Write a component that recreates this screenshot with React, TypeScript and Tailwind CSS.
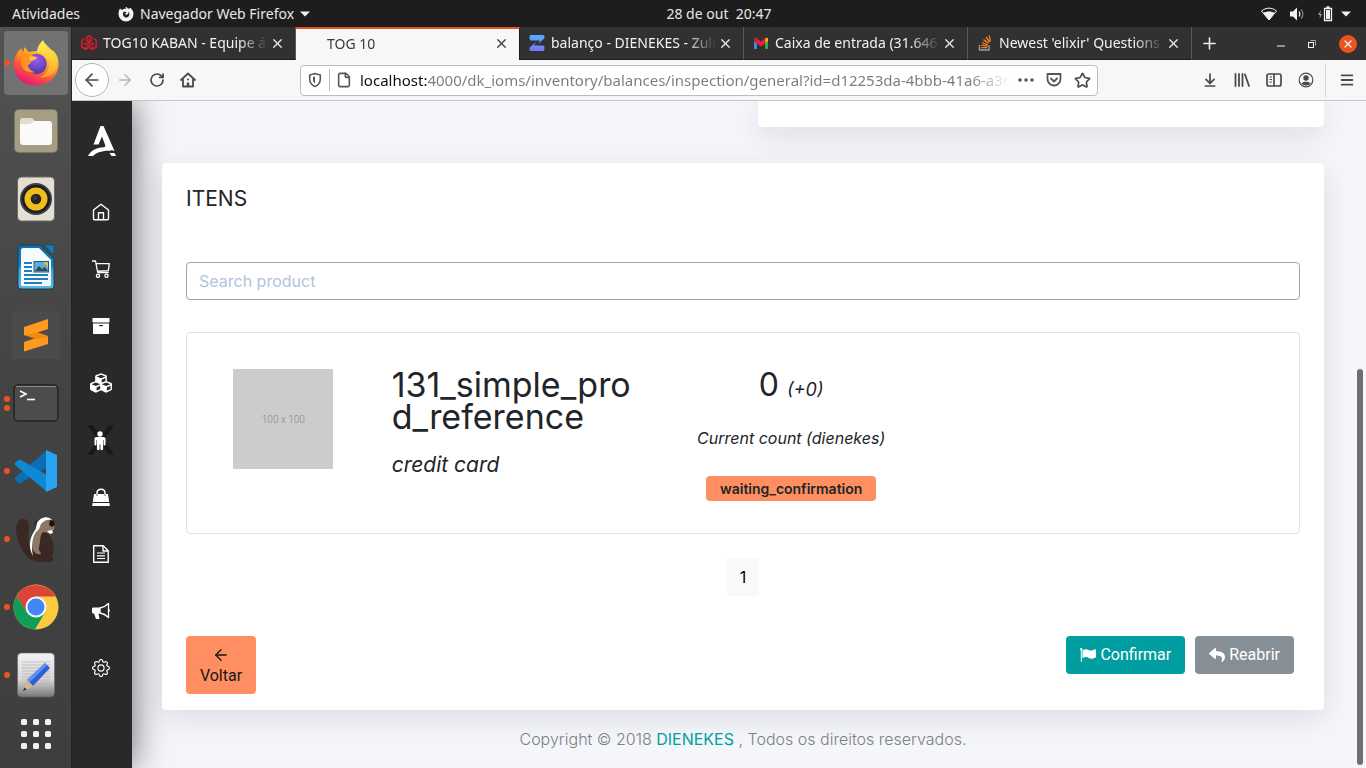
import React from "react";
import {
  ArrowDownToLine,
  ArrowLeft,
  ArrowRight,
  File,
  Menu,
  Plus,
  RotateCw,
  Star,
  X,
} from "lucide-react";
import { FaCubes, FaReply } from "react-icons/fa";
import { BsGear } from "react-icons/bs";

/* ---------- desktop dock icons ---------- */

function FirefoxIcon() {
  return (
    <svg viewBox="0 0 48 48" className="size-12">
      <defs>
        <linearGradient id="ffBody" x1="0.8" y1="0.05" x2="0.3" y2="1">
          <stop offset="0" stopColor="#fff14f" />
          <stop offset="0.35" stopColor="#ffb02e" />
          <stop offset="0.65" stopColor="#ff5a36" />
          <stop offset="1" stopColor="#e5127d" />
        </linearGradient>
        <radialGradient id="ffGlobe" cx="0.5" cy="0.3" r="0.7">
          <stop offset="0" stopColor="#a259f5" />
          <stop offset="1" stopColor="#4b38a8" />
        </radialGradient>
        <linearGradient id="ffTail" x1="0.5" y1="0" x2="0.5" y2="1">
          <stop offset="0" stopColor="#fff44f" />
          <stop offset="1" stopColor="#ffa12c" />
        </linearGradient>
      </defs>
      <path
        d="M8 10c-4 5-6.300 10-6.300 15.500C1.700 38 11.500 46.500 24 46.500S46.500 37 46.500 25c0-6-2-10-5-13l-2-1-8-8-6 9-9 1-4-5-1 5z"
        fill="url(#ffBody)"
      />
      <path
        d="M31 1c-4 4-6 8-6 12 8 1 12 6 12 13 0 6-4 10-9 12 9 2 17-5 17.500-13 .3-7-3-10-5.500-13l.5 4C38 10 33 7 31 1z"
        fill="url(#ffTail)"
      />
      <circle cx="24.500" cy="25" r="10.200" fill="url(#ffGlobe)" />
      <path
        d="M10 8c0 3 .5 4 2 6 3-1 6 0 8 2 1 1 3 2 5 2-1 3-4 3-5 4-2 2-1 3-4 4 0 3 3 6 7 7-6 2-14-2-14-10 0-3 1-5 1-7-2 1-3 3-4 5 0-5 2-9 4-13z"
        fill="#ff9422"
      />
      <path d="M17 18c3-1 5 0 8 0-1 3-4 3-5 4-2-1-3-2-3-4z" fill="#ffc04d" />
    </svg>
  );
}

function FilesIcon() {
  return (
    <svg viewBox="0 0 44 44" className="size-11">
      <rect width="44" height="44" rx="5" fill="#7b745f" />
      <rect x="1" y="1" width="42" height="42" rx="4" fill="#a69d85" />
      <path d="M6 12c0-2 1-3 3-3h9l4 4v4H6z" fill="#e0dccf" />
      <path d="M6 15h10l5-3h14c2 0 3 1 3 3v18c0 2-1 3-3 3H9c-2 0-3-1-3-3z" fill="#fafaf8" />
    </svg>
  );
}

function SpeakerIcon() {
  return (
    <svg viewBox="0 0 38 46" className="h-[46px] w-[38px]">
      <rect x="0.500" y="1" width="37" height="44" rx="4" fill="#e3dfd3" stroke="#6d6a62" />
      <circle cx="19" cy="23" r="16" fill="#3c3c42" />
      <circle cx="19" cy="23" r="14" fill="#1c1c22" />
      <circle cx="19" cy="23" r="11.500" fill="#f1bd1c" />
      <circle cx="19" cy="23" r="5.300" fill="#242424" />
      <circle cx="18" cy="22" r="2" fill="#3c3c3c" />
    </svg>
  );
}

function WriterIcon() {
  return (
    <svg viewBox="0 0 38 46" className="h-[46px] w-[38px]">
      <defs>
        <linearGradient id="writerBlue" x1="0" y1="0" x2="0" y2="1">
          <stop offset="0" stopColor="#0e6ba3" />
          <stop offset="0.5" stopColor="#1b82be" />
          <stop offset="0.52" stopColor="#3b9fd4" />
          <stop offset="1" stopColor="#5db8e4" />
        </linearGradient>
      </defs>
      <path d="M5 1h18l14 14v26c0 3-1 4-4 4H5c-3 0-4-1-4-4V5c0-3 1-4 4-4z" fill="url(#writerBlue)" stroke="#11425f" />
      <path d="M6 4h16l12 12v24c0 2-1 2-2 2H6c-1 0-2 0-2-2V6c0-1 1-2 2-2z" fill="#f7fafc" />
      <path d="M27 1h10v10z" fill="#127cb8" stroke="#11425f" strokeWidth="0.600" />
      <path d="M7 19h8M7 23h8M7 27h8M7 31h24M7 35h24M7 39h18" stroke="#1c7fc0" strokeWidth="2" />
      <rect x="17" y="17.500" width="14.500" height="10.500" fill="#5aaede" stroke="#1b5d88" />
      <path d="M18 27l4-5 3 3 3-2 3 4z" fill="#3e4548" />
      <path d="M26 18h5v5z" fill="#f0bd28" />
    </svg>
  );
}

function SublimeIcon() {
  return (
    <svg viewBox="0 0 48 48" className="size-12">
      <rect width="48" height="48" rx="2" fill="#4b4b4b" />
      <path d="M12 16l24-8v10l-10.500 3.500L36 25v8L12 40.500V31l11-3.700L12 24z" fill="#ff9a1f" />
      <path d="M12 24l13.500-2.500L36 25v1.500l-12 2z" fill="#e87f12" opacity="0.600" />
    </svg>
  );
}

function TerminalIcon() {
  return (
    <svg viewBox="0 0 46 38" className="h-[38px] w-[46px]">
      <rect x="1" y="1" width="44" height="36" rx="4" fill="#4c4c4c" stroke="#222" strokeWidth="1.500" />
      <path d="M3 2.500h40" stroke="#8b8b8b" />
      <path d="M7 7l6 3-6 3" fill="none" stroke="#fff" strokeWidth="1.600" />
      <path d="M14 15.500h8" stroke="#fff" strokeWidth="1.600" />
    </svg>
  );
}

function VsCodeIcon() {
  return (
    <svg viewBox="0 0 44 44" className="size-11">
      <path d="M32 2l11 5-3 7L7 34c-1 .8-2 .8-3 0l-2.500-3c-1-1-.8-2 0-2.800z" fill="#0a6fb3" />
      <path d="M32 42l11-5-3-7L7 11c-1-.8-2-.8-3 0l-2.500 2.500c-1 1-.8 2 0 2.800z" fill="#1089d4" />
      <path d="M32 1l11 5v32l-11 5z" fill="#27a5f2" />
    </svg>
  );
}

function BeaverIcon() {
  return (
    <svg viewBox="0 0 44 48" className="h-12 w-11">
      <path
        d="M6 5c5-3 9 1 9 7 0 7-2 13 1 21l9 12c5 0 8-1 13-3 3 3 1 4-1 5H24C14 46 9 38 5 28 2 20 0 9 6 5z"
        fill="#3a2822"
      />
      <path d="M30 14l5 6c5 7 6 15 3 22l1 4H24c-4-3-6-7-6-12z" fill="#3a2822" />
      <path d="M20 8c1-2 3-3 5-2l-2 5c-2 0-3-1-3-3z" fill="#3a2822" />
      <path d="M24 7c4-5 11-5 15-1l2 2-1 7-5 3-6-1c-4 5-2 9-4 15-1 4 2 5 2 7-5 1-8-2-9-8-1-9 3-17 6-24z" fill="#8d7767" />
      <path d="M36 5l4 1 1 4-3 2-3-2z" fill="#1d1412" />
      <path d="M23 8c3-6 11-8 15-3-4-1-8 0-11 4l-2 5-3 3c-4 6-5 15-3 24-5-8-4-19 3-27z" fill="#fff" />
      <path d="M33 16l5-1 1 3-3 1z" fill="#fff" />
    </svg>
  );
}

function ChromeIcon() {
  return (
    <svg viewBox="0 0 46 46" className="size-[46px]">
      <circle cx="23" cy="23" r="22.500" fill="#fcca3f" />
      <path d="M3.500 12A22.500 22.500 0 0 1 42.500 12.500H23L13.500 28z" fill="#dc4437" />
      <path d="M3.500 12A22.500 22.500 0 0 0 22 45.500L32 28.500 23 33.500 13.700 28.300z" fill="#0f9d58" />
      <circle cx="23" cy="23" r="10.500" fill="#f2f5f9" />
      <circle cx="23" cy="23" r="8.500" fill="#4486f5" />
    </svg>
  );
}

function NotesIcon() {
  return (
    <svg viewBox="0 0 38 46" className="h-[46px] w-[38px]">
      <defs>
        <linearGradient id="notePaper" x1="0" y1="0" x2="0" y2="1">
          <stop offset="0" stopColor="#f2f2f2" />
          <stop offset="0.600" stopColor="#d6d6d6" />
          <stop offset="1" stopColor="#777" />
        </linearGradient>
      </defs>
      <rect x="0.500" y="1" width="37" height="44" rx="4" fill="url(#notePaper)" stroke="#666" strokeWidth="0.600" />
      <path d="M5 10h28M5 13h28M5 16h28M5 19h28M5 22h28M5 25h28M5 28h28M5 31h28M5 34h28" stroke="#b5b5b5" strokeWidth="0.800" />
      <path d="M28 11l5 5-17 18-6-6z" fill="#2d60d8" />
      <path d="M28 11l2 2-18 18-2-3z" fill="#6191f2" />
      <path d="M10 28l6 6-10 5z" fill="#d6b48f" />
      <path d="M6 39l1.500-3.500 2 2z" fill="#222" />
    </svg>
  );
}

function AppGridIcon() {
  const steps = [0, 12, 24];
  return (
    <svg viewBox="0 0 30 30" className="size-[30px]" fill="#f2f2f2">
      {steps.map((y) => steps.map((x) => <rect key={`${x}-${y}`} x={x} y={y} width="6" height="6" rx="1.500" />))}
    </svg>
  );
}

/* ---------- top bar and browser icons ---------- */

function FirefoxGlyph() {
  return (
    <svg viewBox="0 0 16 16" className="size-4">
      <path
        d="M2 2.500l2 1.500c1-1 3-1.500 4-1.200L7.500.8c1 .2 2 1 2.500 2L12.500 2c2 1.600 3 3.800 3 6A7.500 7.500 0 0 1 .5 8c0-2 .5-4 1.500-5.500z"
        fill="#f2f2f2"
      />
      <path d="M5.500 6C4 9 6 11.500 8.200 11.500c3 0 4.200-3.500 2.300-6 .2 1.500-.3 2.500-1.500 3C8 9 7 8.500 7 7.500l1.500-.8C8 6 6.500 5.500 5.500 6z" fill="#1d1d1d" />
    </svg>
  );
}

function CaretDown() {
  return (
    <svg viewBox="0 0 10 6" className="h-[6px] w-[10px]">
      <path d="M0 0.500h10L5 5.500z" fill="#f2f2f2" />
    </svg>
  );
}

function WifiGlyph() {
  return (
    <svg viewBox="0 0 16 14" className="h-[14px] w-4">
      <path d="M8 13L.5 4C5 .2 11 .2 15.500 4z" fill="none" stroke="#f2f2f2" />
      <path d="M8 13L2 6c3.500-2 8.500-2 12 0z" fill="#f2f2f2" />
    </svg>
  );
}

function VolumeGlyph() {
  return (
    <svg viewBox="0 0 16 14" className="h-[14px] w-4">
      <path d="M1 4.500h3l4-4v13l-4-4H1z" fill="#f2f2f2" />
      <path d="M10 4.500c1 1.500 1 3.500 0 5" fill="none" stroke="#f2f2f2" strokeWidth="1.200" />
      <path d="M12 2.500c2.500 2.500 2.500 6.500 0 9" fill="none" stroke="#8a8a8a" strokeWidth="1.200" />
    </svg>
  );
}

function BatteryGlyph() {
  return (
    <svg viewBox="0 0 16 16" className="size-4">
      <path d="M4 4L1 9h2l-.5 4L5 8H3.200z" fill="#9a9a9a" />
      <path d="M7.500 2.500h7v12h-7zM9.500 1h3" fill="none" stroke="#f2f2f2" strokeWidth="1.300" />
      <rect x="9" y="4" width="4" height="9" fill="#f2f2f2" />
    </svg>
  );
}

function CubesFavicon() {
  return (
    <svg viewBox="0 0 16 16" className="size-4 shrink-0" fill="none" stroke="#e01b2b" strokeWidth="1.400">
      <path d="M5.700 6V2.200L8 .8l2.300 1.400V6M8 3.500v6M5.700 6L8 8l2.300-2" />
      <path d="M4 3.500L.8 5.200v6.600L4.500 14.300 7 12.800V10L4.500 8.300 2.500 9.500M4.500 11v3.300" />
      <path d="M12 3.500l3.200 1.700v6.600l-3.700 2.500L9 12.800V10l2.500-1.700 2 1.200M11.500 11v3.300" />
    </svg>
  );
}

function ZulipFavicon() {
  return (
    <svg viewBox="0 0 16 16" className="size-4 shrink-0">
      <defs>
        <linearGradient id="zulip" x1="0" y1="0" x2="0" y2="1">
          <stop offset="0" stopColor="#50adff" />
          <stop offset="1" stopColor="#7877fc" />
        </linearGradient>
      </defs>
      <path
        d="M2 0h12c1.500 0 2 1.500 1.200 3.500L9 9l2-3.500H2C0 5.500 0 0 2 0zM14 16H2C.5 16 0 14.500.8 12.500L7 7l-2 3.500h9c2 0 2 5.500 0 5.500z"
        fill="url(#zulip)"
      />
    </svg>
  );
}

function GmailFavicon() {
  return (
    <svg viewBox="0 0 16 12" className="h-3 w-4 shrink-0">
      <path d="M1 2.500h3V12H2c-.7 0-1-.3-1-1z" fill="#4285f4" />
      <path d="M12 2.500h3V11c0 .7-.3 1-1 1h-2z" fill="#34a853" />
      <path d="M12 1.500C13.500 0 15 1 15 2v2l-3 2.500z" fill="#fbbc04" />
      <path d="M1 2c0-1.500 1.500-2 3-.8V6.500L1 4z" fill="#c5221f" />
      <path d="M3.500 1L8 4.500 12.500 1v5L8 9.500 3.500 6z" fill="#ea1e38" />
    </svg>
  );
}

function StackFavicon() {
  return (
    <svg viewBox="0 0 16 16" className="size-4 shrink-0" fill="none">
      <path d="M2.500 10v5h9.500v-5" stroke="#9a9c9f" strokeWidth="1.300" />
      <path d="M4.300 12.700h6M4.400 10.200l6 .9M5 7.500l5.700 2.300M6.500 4.600l5 3.500M9 2l3.600 5M12.200.5l1.200 6" stroke="#f48024" strokeWidth="1.300" />
    </svg>
  );
}

function ShieldGlyph() {
  return (
    <svg viewBox="0 0 16 16" className="size-4 shrink-0" fill="none" stroke="#555" strokeWidth="1.500">
      <path d="M8 1.500L2.700 3v4c0 3.500 2.300 6.300 5.300 7.500C11 13.300 13.300 10.500 13.300 7V3z" />
      <path d="M8 4.500L6 5v3c0 1.500 1 2.700 2 3.300z" fill="#555" stroke="none" />
    </svg>
  );
}

function PocketGlyph() {
  return (
    <svg viewBox="0 0 16 16" className="size-4" fill="none" stroke="#555" strokeWidth="1.800" strokeLinecap="round" strokeLinejoin="round">
      <path d="M1.500 2h13v5a6.500 6.500 0 0 1-13 0z" />
      <path d="M5 6.500l3 3 3-3" />
    </svg>
  );
}

function HomeGlyph() {
  return (
    <svg viewBox="0 0 16 16" className="size-4" fill="none" stroke="#4a4a4a" strokeWidth="1.800" strokeLinejoin="round">
      <path d="M1 8l7-6.500L15 8M3 7.500v7h10v-7" strokeLinecap="round" />
      <path d="M8 14v-3.500" strokeWidth="2.500" />
      <path d="M7 7.500h2" strokeWidth="1.500" />
    </svg>
  );
}

function LibraryGlyph() {
  return (
    <svg viewBox="0 0 16 16" className="size-4" stroke="#4a4a4a" strokeWidth="1.800" strokeLinecap="round">
      <path d="M1.500 2v12M5 2v12M8.500 2v12M11 2.500l4 11.500" />
    </svg>
  );
}

function SidebarGlyph() {
  return (
    <svg viewBox="0 0 16 16" className="size-4" fill="none" stroke="#4a4a4a" strokeWidth="1.700">
      <rect x="1" y="2" width="14" height="12" rx="2" />
      <path d="M8 2v12" />
      <path d="M3.500 5h2.500M3.500 7.500h2.500M3.500 10h2.500" strokeWidth="1" />
    </svg>
  );
}

function AccountGlyph() {
  return (
    <svg viewBox="0 0 16 16" className="size-4">
      <circle cx="8" cy="8" r="6.800" fill="none" stroke="#4a4a4a" strokeWidth="1.200" />
      <circle cx="8" cy="6" r="2.700" fill="#4a4a4a" />
      <path d="M3.500 11.500c1-2.500 8-2.500 9 0C11 14 5 14 3.500 11.500z" fill="#4a4a4a" />
    </svg>
  );
}

/* ---------- application sidebar icons ---------- */

function AppLogo() {
  return (
    <svg viewBox="0 0 28 30" className="h-[30px] w-7" fill="#fff">
      <path d="M12.500 0h3l11 25c-5-1.500-9-1.800-13-.8l4-4.200L14 10.500 10.500 18.500H5.500z" />
      <path d="M0 30c3-6 10-10 20-8.500l3.500 3.300C15 24 8 26.500 5 30z" />
      <path d="M21.500 27h5l1.500 3h-4.500z" />
    </svg>
  );
}

function HouseIcon() {
  return (
    <svg viewBox="0 0 18 18" className="size-[18px]" fill="none" stroke="#fff" strokeWidth="1.400" strokeLinejoin="round">
      <path d="M1.500 7L9 1.200 16.500 7v8.500c0 .8-.5 1.300-1.300 1.300H2.800c-.8 0-1.300-.5-1.300-1.300z" />
      <path d="M6.500 16.800v-7h5v7" />
    </svg>
  );
}

function CartIcon() {
  return (
    <svg viewBox="0 0 18 18" className="size-[18px]" fill="none" stroke="#fff" strokeWidth="1.300" strokeLinejoin="round">
      <path d="M0 1h3.500l2.200 11.500h11M4 3.700h13.300l-1 7-10.800.5" />
      <circle cx="6" cy="15.800" r="1.600" />
      <circle cx="14.500" cy="15.800" r="1.600" />
    </svg>
  );
}

function ArchiveIcon() {
  return (
    <svg viewBox="0 0 18 18" className="size-[18px]" fill="#fff">
      <rect x="0.500" y="1" width="17" height="4.500" rx="0.500" />
      <path fillRule="evenodd" d="M1 6.500h16V16c0 .6-.3 1-1 1H2c-.7 0-1-.4-1-1zM7.500 8c-.6 0-.6 1.200 0 1.200h3c.6 0 .6-1.200 0-1.200z" />
    </svg>
  );
}

function PersonIcon() {
  return (
    <svg viewBox="0 0 28 30" className="h-[30px] w-7">
      <path d="M3 0l22 30M25 0L3 30" stroke="#191919" strokeWidth="4.500" />
      <g fill="#fff">
        <circle cx="13" cy="9" r="2.700" />
        <path d="M9.500 12h7c1.300 0 2 .8 2 2v5.500c0 1.400-1.900 1.400-1.900 0V15h-.5v9c0 1.500-2.700 1.500-2.700 0v-4.500h-.8V24c0 1.500-2.700 1.500-2.700 0v-9h-.5v4.500c0 1.400-1.900 1.400-1.900 0V14c0-1.200.7-2 2-2z" />
      </g>
    </svg>
  );
}

function BagIcon() {
  return (
    <svg viewBox="0 0 18 18" className="size-[18px]">
      <path d="M5 8V5c0-5 8-5 8 0v3" fill="none" stroke="#fff" strokeWidth="1.500" />
      <path d="M2 6h14l1.200 8H.8z" fill="#fff" />
      <path d="M.5 15h17l.3 3H.2z" fill="#fff" />
      <path d="M5 6v2M13 6v2" stroke="#282828" strokeWidth="0.700" />
    </svg>
  );
}

function DocumentIcon() {
  return (
    <svg viewBox="0 0 18 18" className="size-[18px]" fill="none" stroke="#fff" strokeWidth="1.400" strokeLinejoin="round">
      <path d="M1.700.8h9.500l5 5v11.400H1.700z" />
      <path d="M11 1v5h5" />
      <path d="M5 8h8M5 10.800h8M5 13.500h8" strokeWidth="1.200" />
    </svg>
  );
}

function MegaphoneIcon() {
  return (
    <svg viewBox="0 0 18 18" className="size-[18px]">
      <path d="M0 7c0-1 .5-1.500 1.500-1.500H8v6H6.500l1 5.500H4l-2-5.500C.7 11.500 0 11 0 10z" fill="#fff" />
      <path d="M8 6c3-.5 6-2 8.500-4.500v14C14 13 11 11.500 8 11z" fill="none" stroke="#fff" strokeWidth="1.300" strokeLinejoin="round" />
      <path d="M17 7.500v2" stroke="#fff" strokeWidth="1.500" />
    </svg>
  );
}

function FlagIcon() {
  return (
    <svg viewBox="0 0 16 14" className="h-[14px] w-4 shrink-0" fill="#fff">
      <circle cx="1.300" cy="1.300" r="1.200" />
      <path d="M.8 1.500h1V14h-1z" />
      <path d="M2.500 2.500C7-.5 8.500 2.500 11 2.500c1.500 0 3-1 4-1.300.6-.2 1 .1 1 .6v7c0 .3-.2.5-.5.700-6 3.300-6.500-.7-9.500-.5-1.200 0-2.400.7-3.500 1.300z" />
    </svg>
  );
}

/* ---------- data ---------- */

type DockItem = { label: string; icon: React.ReactNode; dots: number; active?: boolean };

const dockItems: DockItem[] = [
  { label: "Firefox", icon: <FirefoxIcon />, dots: 1, active: true },
  { label: "Arquivos", icon: <FilesIcon />, dots: 0 },
  { label: "Rhythmbox", icon: <SpeakerIcon />, dots: 0 },
  { label: "LibreOffice Writer", icon: <WriterIcon />, dots: 0 },
  { label: "Sublime Text", icon: <SublimeIcon />, dots: 0 },
  { label: "Terminal", icon: <TerminalIcon />, dots: 2 },
  { label: "Visual Studio Code", icon: <VsCodeIcon />, dots: 1 },
  { label: "DBeaver", icon: <BeaverIcon />, dots: 1 },
  { label: "Google Chrome", icon: <ChromeIcon />, dots: 1 },
  { label: "Editor de texto", icon: <NotesIcon />, dots: 1 },
];

type Tab = { title: string; icon?: React.ReactNode; active?: boolean };

const tabs: Tab[] = [
  { title: "TOG10 KABAN - Equipe á", icon: <CubesFavicon /> },
  { title: "TOG 10", active: true },
  { title: "balanço - DIENEKES - Zuli", icon: <ZulipFavicon /> },
  { title: "Caixa de entrada (31.646", icon: <GmailFavicon /> },
  { title: "Newest 'elixir' Questions", icon: <StackFavicon /> },
];

const menuItems = [
  { label: "Início", icon: <HouseIcon /> },
  { label: "Vendas", icon: <CartIcon /> },
  { label: "Estoque", icon: <ArchiveIcon /> },
  { label: "Produtos", icon: <FaCubes className="size-[22px]" /> },
  { label: "Pessoas", icon: <PersonIcon /> },
  { label: "Compras", icon: <BagIcon /> },
  { label: "Documentos", icon: <DocumentIcon /> },
  { label: "Marketing", icon: <MegaphoneIcon /> },
  { label: "Configurações", icon: <BsGear className="size-[18px]" /> },
];

/* ---------- sections ---------- */

function TopBar() {
  return (
    <header className="grid h-[27px] shrink-0 grid-cols-[72px_1fr_auto_1fr] items-center bg-[#1d1d1d] text-sm text-[#e8e8e8]">
      <button className="pl-3 text-left">Atividades</button>
      <button className="flex items-center gap-[6px] pl-[46px]">
        <FirefoxGlyph />
        <span className="whitespace-nowrap">Navegador Web Firefox</span>
        <CaretDown />
      </button>
      <time className="whitespace-pre">28 de out  20:47</time>
      <div className="flex items-center justify-end gap-3 pr-[15px]">
        <WifiGlyph />
        <VolumeGlyph />
        <div className="flex items-center gap-2">
          <BatteryGlyph />
          <CaretDown />
        </div>
      </div>
    </header>
  );
}

function Dock() {
  return (
    <nav
      aria-label="Dock"
      className="flex w-[72px] shrink-0 flex-col items-center gap-1 overflow-hidden border-r border-[#232323] bg-linear-to-b from-[#525252] via-[#434343] to-[#3e3e3e] pt-1"
    >
      {dockItems.map((item) => (
        <button
          key={item.label}
          aria-label={item.label}
          className={`relative flex size-16 shrink-0 items-center justify-center rounded ${item.active ? "bg-[#727272]" : ""}`}
        >
          {item.icon}
          <span className="absolute inset-y-0 left-0 flex flex-col items-center justify-center gap-[3px]">
            {Array.from({ length: item.dots }, (_, i) => (
              <span key={i} className="size-[6px] rounded-full bg-[#e95420]" />
            ))}
          </span>
        </button>
      ))}
      <button aria-label="Mostrar aplicativos" className="flex h-[46px] w-16 shrink-0 items-center justify-center">
        <AppGridIcon />
      </button>
    </nav>
  );
}

function TabStrip() {
  return (
    <div className="flex h-[33px] shrink-0 bg-[#333032] text-sm text-[#f2f2f2]">
      {tabs.map((tab) => (
        <div
          key={tab.title}
          className={`flex min-w-0 max-w-[224px] flex-1 items-center gap-[6px] border-r pr-[10px] pl-[9px] ${
            tab.active
              ? "border-r-[#1a1a1a] border-t-2 border-t-[#e95420] bg-[#f7f7f7] pb-[2px] text-[#3a3a3a]"
              : "border-r-[#5c5a5b] border-b border-b-[#1a1a1a]"
          }`}
        >
          {tab.icon ?? <span className="w-4 shrink-0" />}
          <button className="-mr-1 min-w-0 flex-1 overflow-hidden text-left whitespace-nowrap [mask-image:linear-gradient(to_right,black_82%,transparent)]">
            {tab.title}
          </button>
          <button aria-label="Fechar aba" className="shrink-0">
            <X className="size-[15px]" strokeWidth={2} />
          </button>
        </div>
      ))}
      <button aria-label="Nova aba" className="px-2">
        <Plus className="size-[19px]" strokeWidth={2} />
      </button>
      <div className="ml-auto flex items-center gap-[23px] pr-[9px]">
        <button aria-label="Minimizar" className="pt-1">
          <svg viewBox="0 0 8 2" className="h-[2px] w-2">
            <path d="M0 1h8" stroke="#f2f2f2" />
          </svg>
        </button>
        <button aria-label="Restaurar">
          <svg viewBox="0 0 8 8" className="size-2" fill="none" stroke="#f2f2f2">
            <rect x="0.500" y="2.500" width="5" height="5" />
            <path d="M2.500.5h5v5" stroke="#a5a5a5" />
          </svg>
        </button>
        <button aria-label="Fechar" className="flex size-[18px] items-center justify-center rounded-full bg-[#e95420]">
          <X className="size-3" strokeWidth={2.5} />
        </button>
      </div>
    </div>
  );
}

function NavToolbar() {
  return (
    <div className="flex h-[41px] shrink-0 items-center border-b border-[#c6c6c6] bg-[#f7f7f7] text-[#4a4a4a]">
      <div className="flex items-center gap-[15px] pl-[3px]">
        <button aria-label="Voltar página" className="-mr-2 flex size-[34px] items-center justify-center rounded-full border border-[#b5b5b5] bg-white">
          <ArrowLeft className="size-5" />
        </button>
        <button aria-label="Avançar" className="text-[#b5b5b5]">
          <ArrowRight className="size-[18px]" />
        </button>
        <button aria-label="Recarregar">
          <RotateCw className="size-4" strokeWidth={2.6} />
        </button>
        <button aria-label="Página inicial">
          <HomeGlyph />
        </button>
      </div>
      <div className="mx-[104px] flex h-[31px] min-w-0 flex-1 items-center rounded border border-[#bdbdbd] bg-white px-[6px]">
        <ShieldGlyph />
        <span className="mx-[6px] h-[22px] w-px bg-[#bdbdbd]" />
        <File className="size-4 shrink-0 text-[#555]" strokeWidth={2.4} />
        <input
          aria-label="Endereço"
          readOnly
          defaultValue="localhost:4000/dk_ioms/inventory/balances/inspection/general?id=d12253da-4bbb-41a6-a36"
          className="ml-2 min-w-0 flex-1 bg-[linear-gradient(to_right,#0c0c0d_67px,#7b7b7b_67px,#7b7b7b_94%,transparent)] bg-clip-text text-[15px] text-transparent outline-none"
        />
        <div className="ml-2 flex shrink-0 items-center gap-3">
          <button aria-label="Ações da página">
            <svg viewBox="0 0 16 4" className="h-1 w-4" fill="#555">
              <circle cx="2" cy="2" r="1.800" />
              <circle cx="8" cy="2" r="1.800" />
              <circle cx="14" cy="2" r="1.800" />
            </svg>
          </button>
          <button aria-label="Salvar no Pocket">
            <PocketGlyph />
          </button>
          <button aria-label="Favoritar">
            <Star className="size-[17px]" strokeWidth={2.4} />
          </button>
        </div>
      </div>
      <div className="flex items-center gap-4">
        <button aria-label="Downloads">
          <ArrowDownToLine className="size-4" strokeWidth={2.6} />
        </button>
        <button aria-label="Biblioteca">
          <LibraryGlyph />
        </button>
        <button aria-label="Painéis">
          <SidebarGlyph />
        </button>
        <button aria-label="Conta">
          <AccountGlyph />
        </button>
      </div>
      <span className="ml-[11px] h-[34px] w-px bg-[#d6d6d6]" />
      <button aria-label="Menu" className="pr-[11px] pl-[13px]">
        <Menu className="size-4" strokeWidth={2.8} />
      </button>
    </div>
  );
}

function AppSidebar() {
  return (
    <nav aria-label="Menu principal" className="flex w-[60px] shrink-0 flex-col items-center bg-[#292929] text-white shadow-[0_0_36px_rgba(0,0,0,0.6)]">
      <a href="#inicio" aria-label="TOG 10" className="h-[82px] shrink-0 pt-[25px]">
        <AppLogo />
      </a>
      {menuItems.map((item) => (
        <a
          key={item.label}
          href={`#${item.label}`}
          aria-label={item.label}
          className="flex h-[57px] w-full shrink-0 items-center justify-center pr-[2px]"
        >
          {item.icon}
        </a>
      ))}
    </nav>
  );
}

function ProductCard() {
  return (
    <article className="mt-8 grid grid-cols-12 rounded border border-[#dee2e6] pt-9 pb-8 pl-1 text-[#212529]">
      <div className="col-span-2 flex justify-center">
        <div className="flex size-[100px] items-center justify-center bg-[#ccc] font-[Roboto,sans-serif] text-[10px] font-light text-[#8a8a8a]">
          100 x 100
        </div>
      </div>
      <div className="col-span-3 px-4">
        <h3 className="text-[34px] leading-8">
          131_simple_pro
          <br />
          d_reference
        </h3>
        <p className="mt-5 text-[21px] leading-6 italic">credit card</p>
      </div>
      <div className="col-span-3 flex flex-col items-center">
        <p className="flex items-baseline gap-2 leading-8">
          <span className="text-[32px]">0</span>
          <em className="text-lg leading-8">(+0)</em>
        </p>
        <p className="mt-[18px] text-base leading-7 italic">Current count (dienekes)</p>
        <span className="mt-6 rounded bg-[#ff8f60] px-[14px] text-sm leading-[25px] font-semibold text-[#212529]">
          waiting_confirmation
        </span>
      </div>
    </article>
  );
}

function Content() {
  return (
    <main className="relative flex min-w-0 flex-1 flex-col pr-[42px] pl-[30px] font-['Inter',sans-serif]">
      <div className="flex justify-end">
        <div className="h-[26px] w-[566px] rounded-b bg-white shadow-[0_8px_30px_rgba(20,20,43,0.11)]" />
      </div>
      <section className="mt-9 rounded bg-white px-6 pt-6 pb-4 shadow-[0_8px_30px_rgba(20,20,43,0.11)]">
        <h2 className="text-[21px] leading-6 text-[#212529]">ITENS</h2>
        <input
          type="text"
          aria-label="Search product"
          placeholder="Search product"
          className="mt-[51px] block h-[38px] w-full rounded border border-[#a3a3a3] px-3 text-base placeholder:text-[#b0c4de]"
        />
        <ProductCard />
        <nav aria-label="Paginação" className="mt-6 flex justify-center">
          <button className="h-[38px] w-8 rounded bg-[#f8f9fa] text-base text-black">1</button>
        </nav>
        <div className="mt-10 flex items-start justify-between font-[Roboto,sans-serif]">
          <a href="#voltar" className="flex w-[70px] flex-col items-center rounded bg-[#ff8f60] py-2 leading-[21px] text-[#16181b]">
            <span className="flex h-[21px] items-center">
              <ArrowLeft className="size-[18px]" strokeWidth={1.8} />
            </span>
            Voltar
          </a>
          <div className="flex gap-[10px] pr-[6px] text-white">
            <button className="flex h-[38px] items-center gap-1 rounded bg-[#009ea0] px-[14px]">
              <FlagIcon />
              Confirmar
            </button>
            <button className="flex h-[38px] items-center gap-1 rounded bg-[#868e96] px-[14px]">
              <FaReply className="size-4" />
              Reabrir
            </button>
          </div>
        </div>
      </section>
      <footer className="pt-[17px] text-center leading-6 font-light text-[#7b8087]">
        Copyright © 2018{" "}
        <a href="#dienekes" className="font-normal text-[#009ea0]">
          DIENEKES
        </a>{" "}
        , Todos os direitos reservados.
      </footer>
      <span className="absolute right-[3px] bottom-[3px] h-[396px] w-[6px] rounded-full bg-[#6e6e6e]" />
    </main>
  );
}

export default function App() {
  return (
    <div className="flex min-h-screen flex-col font-['Noto_Sans',sans-serif]">
      <TopBar />
      <div className="flex flex-1">
        <Dock />
        <div className="flex min-w-0 flex-1 flex-col">
          <TabStrip />
          <NavToolbar />
          <div className="flex flex-1 overflow-hidden bg-[#f5f6fa]">
            <AppSidebar />
            <Content />
          </div>
        </div>
      </div>
    </div>
  );
}
